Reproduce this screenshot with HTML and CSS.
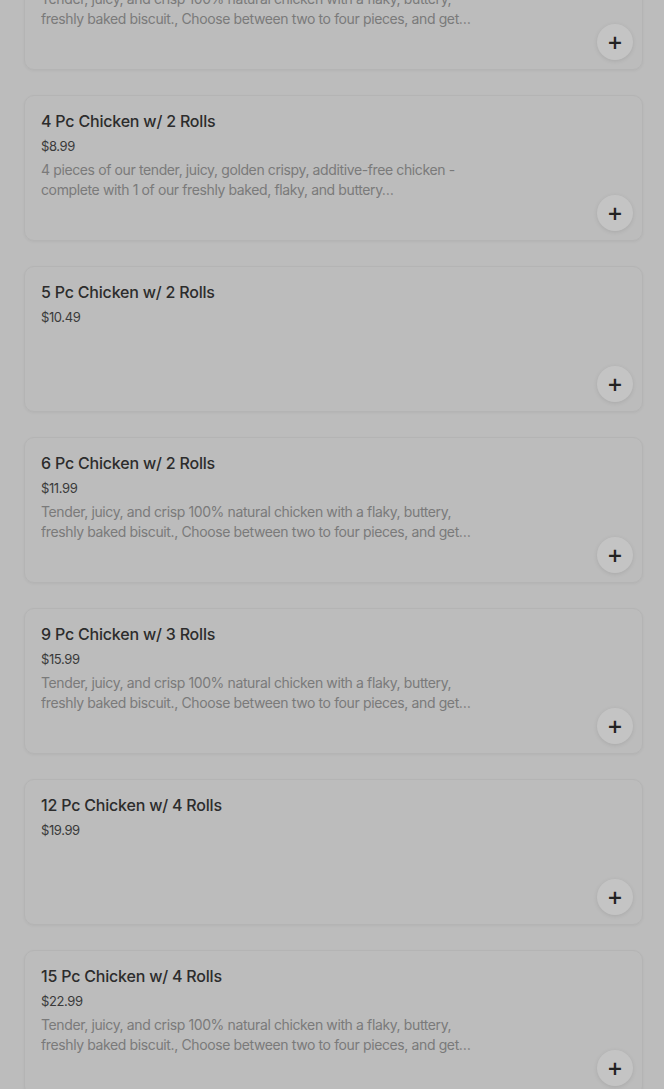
FILE: index.html
```html
<!DOCTYPE html>
<html lang="en">
<head>
    <meta charset="UTF-8">
    <meta name="viewport" content="width=device-width, initial-scale=1.0">
    <title>Menu</title>
    <link rel="stylesheet" href="styles.css">
</head>
<body>
    <div class="menu-list">
        <!-- partially scrolled item -->
        <div class="menu-card">
            <div class="info">
                <div class="title">3 Pc Chicken w/ 1 Roll</div>
                <div class="price">$7.49</div>
                <div class="desc">Tender, juicy, and crisp 100% natural chicken with a flaky, buttery, freshly baked biscuit., Choose between two to four pieces, and get a side of your choice.</div>
            </div>
            <button class="add-btn">+</button>
        </div>

        <div class="menu-card">
            <div class="info">
                <div class="title">4 Pc Chicken w/ 2 Rolls</div>
                <div class="price">$8.99</div>
                <div class="desc">4 pieces of our tender, juicy, golden crispy, additive-free chicken - complete with 1 of our freshly baked, flaky, and buttery…</div>
            </div>
            <button class="add-btn">+</button>
        </div>

        <div class="menu-card">
            <div class="info">
                <div class="title">5 Pc Chicken w/ 2 Rolls</div>
                <div class="price">$10.49</div>
            </div>
            <button class="add-btn">+</button>
        </div>

        <div class="menu-card">
            <div class="info">
                <div class="title">6 Pc Chicken w/ 2 Rolls</div>
                <div class="price">$11.99</div>
                <div class="desc">Tender, juicy, and crisp 100% natural chicken with a flaky, buttery, freshly baked biscuit., Choose between two to four pieces, and get a side of your choice.</div>
            </div>
            <button class="add-btn">+</button>
        </div>

        <div class="menu-card">
            <div class="info">
                <div class="title">9 Pc Chicken w/ 3 Rolls</div>
                <div class="price">$15.99</div>
                <div class="desc">Tender, juicy, and crisp 100% natural chicken with a flaky, buttery, freshly baked biscuit., Choose between two to four pieces, and get a side of your choice.</div>
            </div>
            <button class="add-btn">+</button>
        </div>

        <div class="menu-card">
            <div class="info">
                <div class="title">12 Pc Chicken w/ 4 Rolls</div>
                <div class="price">$19.99</div>
            </div>
            <button class="add-btn">+</button>
        </div>

        <div class="menu-card">
            <div class="info">
                <div class="title">15 Pc Chicken w/ 4 Rolls</div>
                <div class="price">$22.99</div>
                <div class="desc">Tender, juicy, and crisp 100% natural chicken with a flaky, buttery, freshly baked biscuit., Choose between two to four pieces, and get a side of your choice.</div>
            </div>
            <button class="add-btn">+</button>
        </div>
    </div>
</body>
</html>
```

FILE: styles.css
```css
/* page under a dimmed overlay */
body {
    margin: 0;
    background: #bcbcbc;
    font-family: Inter, "Noto Sans", sans-serif;
    overflow: hidden;
}

/* list, scrolled part way into the first item */
.menu-list {
    display: flex;
    flex-direction: column;
    gap: 25px;
    padding: 0 21px 0 24px;
    margin-top: -76px;
}

.menu-card {
    display: flex;
    justify-content: space-between;
    height: 146px;
    box-sizing: border-box;
    padding: 14px 9px 9px 16px;
    border: 1px solid #b4b4b4;
    border-radius: 10px;
    box-shadow: 0 1px 3px rgba(0,0,0,0.05);
}

.info {
    width: 432px;
}

.title {
    font-size: 16px;
    line-height: 22px;
    font-weight: 500;
    letter-spacing: -0.2px;
    color: #2c2c2c;
}

.price {
    margin-top: 4px;
    font-size: 13px;
    line-height: 20px;
    letter-spacing: -0.4px;
    color: #3a3a3a;
}

.desc {
    margin-top: 4px;
    font-size: 14px;
    line-height: 20px;
    letter-spacing: -0.38px;
    color: #7a7a7a;
    display: -webkit-box;
    -webkit-line-clamp: 2;
    -webkit-box-orient: vertical;
    overflow: hidden;
}

/* add button */
.add-btn {
    align-self: flex-end;
    width: 36px;
    height: 36px;
    padding: 0;
    border: none;
    border-radius: 50%;
    background: #c4c4c4;
    box-shadow: 0 1px 4px rgba(0,0,0,0.1);
    color: #222;
    font-family: "DejaVu Sans", sans-serif;
    font-size: 19px;
    font-weight: bold;
    line-height: 36px;
    cursor: pointer;
}
```
